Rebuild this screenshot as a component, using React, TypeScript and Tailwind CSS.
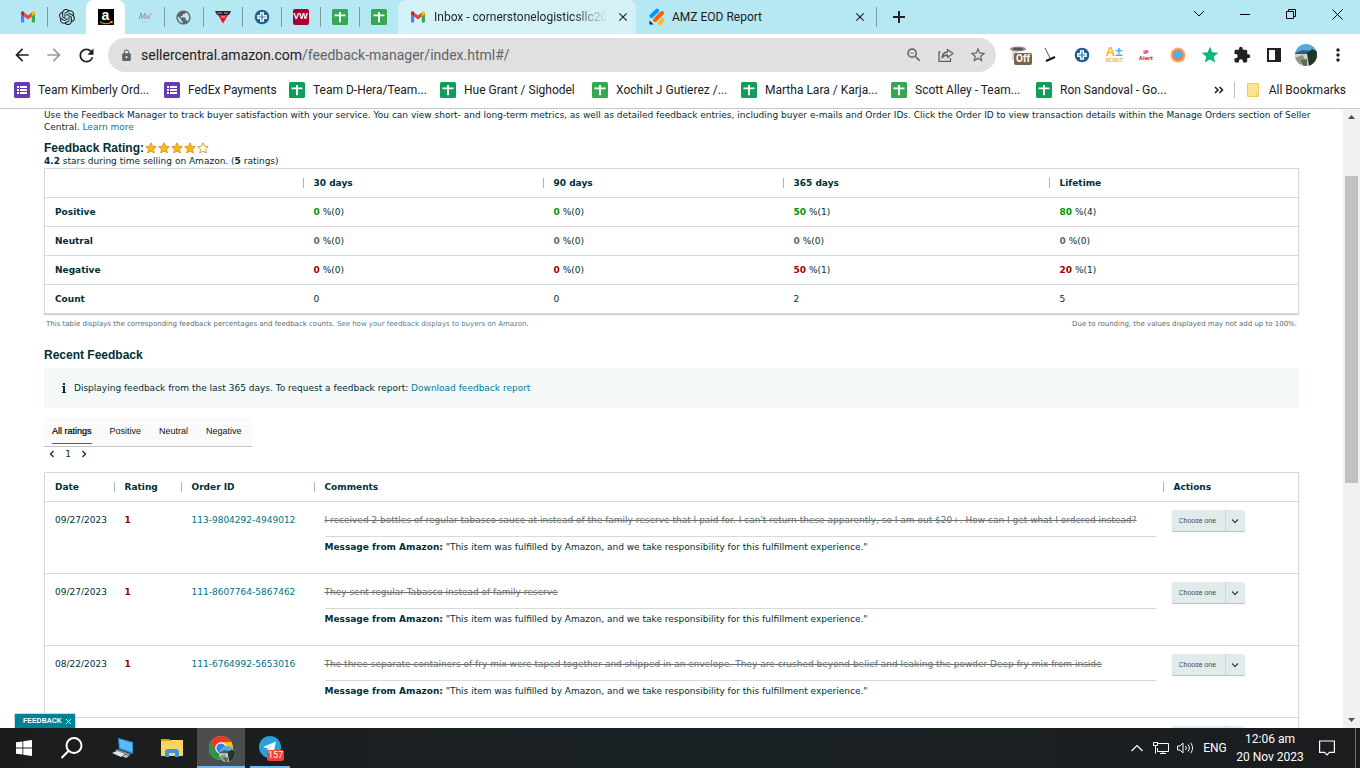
import React, { useState } from 'react';
import { SiOpenai } from 'react-icons/si';
import {
  MdArrowBack,
  MdArrowForward,
  MdClose,
  MdExtension,
  MdLock,
  MdMoreVert,
  MdPublic,
  MdRefresh,
  MdStar,
  MdStarBorder,
  MdZoomOut,
} from 'react-icons/md';

/* ---------- Small icons ---------- */

const GmailIcon = () => (
  <svg className="shrink-0" width="16" height="16" viewBox="0 0 16 16" aria-hidden="true">
    <path d="M1 4.200V12.500a1 1 0 0 0 1 1h2.200V6.600z" fill="#4285f4" />
    <path d="M15 4.200V12.500a1 1 0 0 1-1 1h-2.200V6.600z" fill="#34a853" />
    <path d="M11.800 3.600v3.900L15 5.100V4c0-1.400-1.500-2.100-2.600-1.300z" fill="#fbbc04" />
    <path d="M4.200 7.500V3.600L8 6.400l3.800-2.800v3.900L8 10.400z" fill="#ea4335" />
    <path d="M1 4v1.100l3.200 2.400V3.600l-.6-.9C2.500 1.900 1 2.600 1 4z" fill="#c5221f" />
  </svg>
);

const AmazonIcon = () => (
  <span className="relative flex h-4 w-4 justify-center bg-black font-['Liberation_Sans',sans-serif] text-sm leading-3 font-bold text-white">
    a
    <svg className="absolute bottom-0 left-0" width="16" height="4" viewBox="0 0 16 4" aria-hidden="true">
      <path d="M2 .8c3.500 2.600 8.500 2.600 12 0M12 .4l2.200.1-.4 1.900" fill="none" stroke="#f79400" strokeWidth="1.100" />
    </svg>
  </span>
);

const SheetIcon = ({ color = '#34a853' }: { color?: string }) => (
  <svg className="shrink-0" width="16" height="16" viewBox="0 0 16 16" aria-hidden="true">
    <rect width="16" height="16" rx="1.500" fill={color} />
    <path d="M7 3h2v2.500h4.500v1.800H9v6H7v-6H2.500V5.500H7z" fill="#fff" />
  </svg>
);

const FormIcon = () => (
  <svg className="shrink-0" width="16" height="16" viewBox="0 0 16 16" aria-hidden="true">
    <rect width="16" height="16" rx="1.500" fill="#673ab7" />
    <path d="M3 4h2v2H3zM6 4h7v2H6zM3 7h2v2H3zM6 7h7v2H6zM3 10h2v2H3zM6 10h7v2H6z" fill="#fff" />
  </svg>
);

const PlusBadgeIcon = () => (
  <svg width="16" height="16" viewBox="0 0 16 16" aria-hidden="true">
    <circle cx="8" cy="8" r="7.300" fill="#1f6391" />
    <path d="M6 3.200h4V6h2.800v4H10v2.800H6V10H3.200V6H6z" fill="#fff" />
    <path d="M7.400 4.500h1.200v2.900h2.900v1.200H8.600v2.900H7.400V8.600H4.500V7.400h2.900z" fill="#2c77a5" />
  </svg>
);

const TriangleIcon = () => (
  <svg width="16" height="16" viewBox="0 0 16 16" aria-hidden="true">
    <path d="M0 2h16l-2 4H2z" fill="#2a1a3e" />
    <path d="M2 4h5M9 4h4" stroke="#e8a13a" strokeWidth="1" />
    <path d="M3 6h10L8 14.500z" fill="#f0131e" />
    <path d="M6 8h4" stroke="#fff" strokeWidth=".8" />
  </svg>
);

const ScribbleIcon = () => (
  <svg width="16" height="16" viewBox="0 0 16 16" aria-hidden="true">
    <path d="M2 10l2-6 1 6 3-6v6" fill="none" stroke="#7d9bb5" strokeWidth="1" />
    <path d="M8 5l2 5 1-4 1 4 2-6" fill="none" stroke="#d99aa5" strokeWidth="1" />
    <path d="M4 13h8" stroke="#b7cdd6" strokeWidth="1" />
  </svg>
);

const JotformIcon = () => (
  <svg className="shrink-0" width="18" height="18" viewBox="0 0 18 18" aria-hidden="true">
    <path d="M3.500 8L9 2.700" stroke="#0099ff" strokeWidth="4" strokeLinecap="round" />
    <path d="M7 12l7-7" stroke="#ff6100" strokeWidth="4" strokeLinecap="round" />
    <path d="M11.500 15l3-3" stroke="#ffb629" strokeWidth="4" strokeLinecap="round" />
    <path d="M1.500 12.500v4h4z" fill="#0a1551" />
  </svg>
);

const ShareIcon = () => (
  <svg width="18" height="18" viewBox="0 0 18 18" fill="none" stroke="#5f6368" strokeWidth="1.300" aria-hidden="true">
    <path d="M3.500 6H2v9.300h11.500V12" />
    <path d="M10.500 3.500L16 7.500l-5.500 4V9C8 9 6.300 10 5 12c.3-3.500 2.300-5.800 5.500-6z" strokeLinejoin="round" />
  </svg>
);

const AvatarIcon = ({ size = 22 }: { size?: number }) => (
  <svg width={size} height={size} viewBox="0 0 22 22" aria-hidden="true">
    <clipPath id={`avatar-${size}`}>
      <circle cx="11" cy="11" r="11" />
    </clipPath>
    <g clipPath={`url(#avatar-${size})`}>
      <rect width="22" height="22" fill="#5aa9dd" />
      <path d="M0 9l8-3 14 2v3H0z" fill="#35598a" />
      <path d="M0 10h22v12H0z" fill="#d3d0bb" />
      <path d="M0 14l8-3 2 6-6 5H0z" fill="#8f9684" />
      <path d="M12 9l5-4 5 2v9l-4 6h-4l-1-6z" fill="#23352b" />
      <path d="M6 16l6-1v7H8z" fill="#5d6b52" />
    </g>
  </svg>
);

const Chevron = ({ d, size = 8 }: { d: string; size?: number }) => (
  <svg width={size} height={size} viewBox="0 0 8 8" fill="none" stroke="currentColor" strokeWidth="1.300" aria-hidden="true">
    <path d={d} />
  </svg>
);

/* ---------- Browser chrome ---------- */

interface PinnedTab {
  name: string;
  icon: React.ReactNode;
  active?: boolean;
  divider?: boolean;
}

const pinnedTabs: PinnedTab[] = [
  { name: 'Gmail', icon: <GmailIcon />, divider: true },
  { name: 'ChatGPT', icon: <SiOpenai size={16} color="#202124" /> },
  { name: 'Amazon', icon: <AmazonIcon />, active: true },
  { name: 'Notes', icon: <ScribbleIcon />, divider: true },
  { name: 'Web', icon: <MdPublic size={17} color="#5f6368" />, divider: true },
  { name: 'Triangle', icon: <TriangleIcon />, divider: true },
  { name: 'Plus', icon: <PlusBadgeIcon />, divider: true },
  {
    name: 'VW',
    icon: (
      <span className="flex h-4 w-4 items-center justify-center rounded-xs bg-[#a3002b] font-['Liberation_Sans',sans-serif] text-[9px] font-bold text-white">
        VW
      </span>
    ),
    divider: true,
  },
  { name: 'Sheet 1', icon: <SheetIcon />, divider: true },
  { name: 'Sheet 2', icon: <SheetIcon /> },
];

const TabStrip = () => (
  <div className="flex h-[34px] shrink-0 items-stretch bg-[#b5e8f2] pl-2 text-[#202124]">
    {pinnedTabs.map((tab) => (
      <button
        key={tab.name}
        aria-label={tab.name}
        className={
          tab.active
            ? 'flex w-[39px] items-center justify-center rounded-t-lg bg-white'
            : 'relative flex w-[39px] items-center justify-center'
        }
      >
        {tab.icon}
        {tab.divider && <span className="absolute top-[7px] -right-px h-5 w-px bg-[#7f9aa1]" />}
      </button>
    ))}
    <div className="flex w-[238px] items-center rounded-t-lg bg-[#d3f1f6] pr-1.5 pl-3 text-xs">
      <GmailIcon />
      <span className="ml-2 flex-1 bg-gradient-to-r from-[#202124] from-80% to-transparent bg-clip-text whitespace-nowrap text-transparent">
        Inbox - cornerstonelogisticsllc20
      </span>
      <button aria-label="Close tab" className="ml-2 flex w-4 justify-center">
        <MdClose size={14} />
      </button>
    </div>
    <div className="relative flex w-[240px] items-center pr-2 pl-3 text-xs">
      <JotformIcon />
      <span className="ml-1.5 flex-1">AMZ EOD Report</span>
      <button aria-label="Close tab" className="flex w-4 justify-center">
        <MdClose size={14} />
      </button>
      <span className="absolute top-[7px] -right-px h-5 w-px bg-[#7f9aa1]" />
    </div>
    <button aria-label="New tab" className="ml-4 flex items-center">
      <svg width="14" height="14" viewBox="0 0 14 14" stroke="#202124" strokeWidth="2">
        <path d="M1 7h12M7 1v12" />
      </svg>
    </button>
    <div className="mb-1.5 ml-auto flex items-center">
      <button aria-label="Search tabs" className="flex w-[46px] justify-center">
        <svg width="12" height="8" viewBox="0 0 12 8" fill="none" stroke="#000">
          <path d="M1 1l5 5 5-5" />
        </svg>
      </button>
      <button aria-label="Minimize" className="flex w-[46px] justify-center">
        <span className="h-px w-2.5 bg-black" />
      </button>
      <button aria-label="Restore" className="flex w-[46px] justify-center">
        <svg width="10" height="10" viewBox="0 0 10 10" fill="none" stroke="#000">
          <path d="M.5 2.500h7v7h-7zM2.500 2V.5h7v7H8" />
        </svg>
      </button>
      <button aria-label="Close" className="flex w-[46px] justify-center">
        <svg width="11" height="11" viewBox="0 0 11 11" stroke="#000">
          <path d="M.5.5l10 10M10.500.5l-10 10" />
        </svg>
      </button>
    </div>
  </div>
);

const extensions: { name: string; icon: React.ReactNode }[] = [
  {
    name: 'Off',
    icon: (
      <span className="relative flex h-5 w-5 justify-center">
        <svg width="16" height="16" viewBox="0 0 16 16">
          <ellipse cx="8" cy="4" rx="8" ry="2.500" fill="#8b8b8b" />
          <ellipse cx="8" cy="4" rx="5" ry="1.200" fill="#555" />
          <path d="M2 6v9h5V7z" fill="#d8d8d8" />
        </svg>
        <span className="absolute top-2 left-1.5 rounded-xs bg-[#7a6245] px-0.5 text-[10px] leading-3 font-bold text-white">Off</span>
      </span>
    ),
  },
  {
    name: 'Broom',
    icon: (
      <svg width="16" height="16" viewBox="0 0 16 16" fill="none">
        <path d="M3 1l5 10" stroke="#555" />
        <path d="M4 14l9-4" stroke="#111" strokeWidth="2" />
      </svg>
    ),
  },
  { name: 'Plus', icon: <PlusBadgeIcon /> },
  {
    name: 'Scout',
    icon: (
      <span className="flex flex-col items-center font-['Liberation_Sans',sans-serif] font-bold text-[#fbb829]">
        <span className="text-[13px] leading-[10px]">
          A<span className="text-[#3cb6dd]">±</span>
        </span>
        <span className="text-[5px] leading-[6px] text-[#f5a24a]">SCOUT</span>
      </span>
    ),
  },
  {
    name: 'IP Alert',
    icon: (
      <span className="flex flex-col items-center font-['DejaVu_Sans',sans-serif] text-[5px] leading-[6px] font-bold text-[#e6151f]">
        <span>IP</span>
        <span>Alert</span>
      </span>
    ),
  },
  {
    name: 'Orb',
    icon: (
      <svg width="16" height="16" viewBox="0 0 16 16">
        <circle cx="8" cy="8" r="7.500" fill="#f7a76c" />
        <circle cx="8" cy="8" r="5.500" fill="#f07c35" />
        <circle cx="8" cy="7.500" r="4" fill="#46b4ee" />
      </svg>
    ),
  },
  { name: 'Star', icon: <MdStar size={20} color="#0bb77a" /> },
  { name: 'Extensions', icon: <MdExtension size={18} color="#202124" /> },
  {
    name: 'Side panel',
    icon: (
      <svg width="14" height="14" viewBox="0 0 14 14">
        <path d="M0 0h14v14H0zM2 2v10h6V2z" fill="#202124" fillRule="evenodd" />
      </svg>
    ),
  },
  { name: 'Profile', icon: <AvatarIcon /> },
  { name: 'Menu', icon: <MdMoreVert size={20} color="#202124" /> },
];

const Toolbar = () => (
  <div className="flex h-[42px] shrink-0 items-center bg-white pr-1.5 pl-1.5">
    <button aria-label="Back" className="flex w-8 justify-center">
      <MdArrowBack size={20} color="#202124" />
    </button>
    <button aria-label="Forward" className="flex w-8 justify-center">
      <MdArrowForward size={20} color="#9a9b9d" />
    </button>
    <button aria-label="Reload" className="flex w-8 justify-center">
      <MdRefresh size={21} color="#202124" />
    </button>
    <div className="mr-1.5 ml-1.5 flex h-[34px] flex-1 items-center rounded-full bg-[#e0e0e0] pr-0.5 pl-3 text-sm">
      <MdLock size={13} color="#5f6368" />
      <span className="ml-2 flex-1 text-[#5f6368]">
        <span className="text-[#202124]">sellercentral.amazon.com</span>/feedback-manager/index.html#/
      </span>
      <button aria-label="Zoom" className="flex w-8 justify-center">
        <MdZoomOut size={18} color="#5f6368" />
      </button>
      <button aria-label="Share" className="flex w-8 justify-center">
        <ShareIcon />
      </button>
      <button aria-label="Bookmark" className="flex w-8 justify-center">
        <MdStarBorder size={18} color="#5f6368" />
      </button>
    </div>
    {extensions.map((ext) => (
      <button key={ext.name} aria-label={ext.name} className="flex w-8 items-center justify-center">
        {ext.icon}
      </button>
    ))}
  </div>
);

const bookmarks = [
  { label: 'Team Kimberly Ord...', icon: <FormIcon />, width: 'w-[150px]' },
  { label: 'FedEx Payments', icon: <FormIcon />, width: 'w-[125px]' },
  { label: 'Team D-Hera/Team...', icon: <SheetIcon color="#0f9d58" />, width: 'w-[151px]' },
  { label: 'Hue Grant / Sighodel', icon: <SheetIcon color="#0f9d58" />, width: 'w-[152px]' },
  { label: 'Xochilt J Gutierez /...', icon: <SheetIcon />, width: 'w-[149px]' },
  { label: 'Martha Lara / Karja...', icon: <SheetIcon color="#0f9d58" />, width: 'w-[150px]' },
  { label: 'Scott Alley - Team...', icon: <SheetIcon />, width: 'w-[145px]' },
  { label: 'Ron Sandoval - Go...', icon: <SheetIcon color="#0f9d58" />, width: 'w-[150px]' },
];

const BookmarksBar = () => (
  <div className="flex h-[33px] shrink-0 items-center border-b border-[#c6c7c9] bg-white pr-3.5 pb-1 pl-3.5 text-xs text-[#202124]">
    {bookmarks.map((b) => (
      <a key={b.label} href="#" className={`flex items-center gap-2 whitespace-nowrap ${b.width}`}>
        {b.icon}
        {b.label}
      </a>
    ))}
    <button aria-label="More bookmarks" className="mr-2.5 ml-auto">
      <svg width="10" height="8" viewBox="0 0 10 8" fill="none" stroke="#202124" strokeWidth="1.600">
        <path d="M1 1l3 3-3 3M5.500 1l3 3-3 3" />
      </svg>
    </button>
    <span className="h-4 w-px bg-[#b9bbbd]" />
    <button className="ml-3 flex items-center gap-2.5 whitespace-nowrap">
      <svg width="12" height="14" viewBox="0 0 12 14">
        <path d="M.5.5h11v13H.5z" fill="#fde293" stroke="#f0cb5b" />
        <path d="M9.500 11v2.500" stroke="#f0cb5b" />
      </svg>
      All Bookmarks
    </button>
  </div>
);

/* ---------- Feedback manager ---------- */

type Tone = 'positive' | 'neutral' | 'negative';

const toneClass: Record<Tone, string> = {
  positive: 'text-[#009400]',
  neutral: 'text-[#5f6b6d]',
  negative: 'text-[#a00000]',
};

const ratingRows: { label: string; tone: Tone; values: [number, number][] }[] = [
  { label: 'Positive', tone: 'positive', values: [[0, 0], [0, 0], [50, 1], [80, 4]] },
  { label: 'Neutral', tone: 'neutral', values: [[0, 0], [0, 0], [0, 0], [0, 0]] },
  { label: 'Negative', tone: 'negative', values: [[0, 0], [0, 0], [50, 1], [20, 1]] },
];

const HeaderCell = ({ children }: { children?: React.ReactNode }) => (
  <th className="group p-0 text-left">
    <div className="flex h-2.5 items-center border-r border-[#aab7b8] pl-2.5 whitespace-nowrap group-last:border-r-0">{children}</div>
  </th>
);

const RatingTable = () => (
  <table className="w-full table-fixed border border-[#d5dbdb] bg-white shadow-[0_1px_1px_#d0d4d4]">
    <colgroup>
      <col className="w-[259px]" />
      <col className="w-[240px]" />
      <col className="w-[240px]" />
      <col className="w-[266px]" />
      <col />
    </colgroup>
    <thead>
      <tr className="h-[29px]">
        <HeaderCell />
        <HeaderCell>30 days</HeaderCell>
        <HeaderCell>90 days</HeaderCell>
        <HeaderCell>365 days</HeaderCell>
        <HeaderCell>Lifetime</HeaderCell>
      </tr>
    </thead>
    <tbody>
      {ratingRows.map((row) => (
        <tr key={row.label} className="h-[29px] border-t border-[#d5dbdb]">
          <th className="py-0 pl-2.5 text-left">{row.label}</th>
          {row.values.map(([percent, count], i) => (
            <td key={i} className="py-0 pl-2.5">
              <b className={toneClass[row.tone]}>{percent}</b> %({count})
            </td>
          ))}
        </tr>
      ))}
      <tr className="h-[29px] border-t border-[#d5dbdb]">
        <th className="py-0 pl-2.5 text-left">Count</th>
        {[0, 0, 2, 5].map((count, i) => (
          <td key={i} className="py-0 pl-2.5">
            {count}
          </td>
        ))}
      </tr>
    </tbody>
  </table>
);

const feedback = [
  {
    date: '09/27/2023',
    rating: 1,
    orderId: '113-9804292-4949012',
    comment:
      "I received 2 bottles of regular tabasco sauce at instead of the family reserve that I paid for. I can't return these apparently, so I am out $20+. How can I get what I ordered instead?",
  },
  {
    date: '09/27/2023',
    rating: 1,
    orderId: '111-8607764-5867462',
    comment: 'They sent regular Tabasco instead of family reserve',
  },
  {
    date: '08/22/2023',
    rating: 1,
    orderId: '111-6764992-5653016',
    comment:
      'The three separate containers of fry mix were taped together and shipped in an envelope. They are crushed beyond belief and leaking the powder Deep fry mix from inside',
  },
];

const ActionSelect = ({ label }: { label: string }) => (
  <div className="relative h-[21px] w-[73px] text-[#3f4f52]">
    <select
      aria-label={label}
      className="block h-full w-full appearance-none rounded-xs bg-[#e2ebec] pl-[7px] font-['Liberation_Sans',sans-serif] text-[7px] shadow-[0_1px_1px_#b5bdbe]"
    >
      <option>Choose one</option>
    </select>
    <span className="pointer-events-none absolute inset-y-0 right-0 flex w-5 items-center justify-center border-l border-[#cfd9da]">
      <Chevron d="M1 2.500l3 3 3-3" />
    </span>
  </div>
);

const FeedbackTable = () => (
  <table className="w-full table-fixed border border-[#d5dbdb] bg-white shadow-[0_1px_1px_#d0d4d4]">
    <colgroup>
      <col className="w-[70px]" />
      <col className="w-[67px]" />
      <col className="w-[133px]" />
      <col />
      <col className="w-[135px]" />
    </colgroup>
    <thead>
      <tr className="h-[29px]">
        <HeaderCell>Date</HeaderCell>
        <HeaderCell>Rating</HeaderCell>
        <HeaderCell>Order ID</HeaderCell>
        <HeaderCell>Comments</HeaderCell>
        <HeaderCell>Actions</HeaderCell>
      </tr>
    </thead>
    <tbody>
      {feedback.map((item) => (
        <tr key={item.orderId} className="h-[72px] border-t border-[#d5dbdb] align-top">
          <td className="pt-3 pl-2.5">{item.date}</td>
          <td className="pt-3 pl-2.5 font-bold text-[#a00000]">{item.rating}</td>
          <td className="pt-3 pl-2.5">
            <a href="#" className="text-[#007185]">
              {item.orderId}
            </a>
          </td>
          <td className="pt-3 pr-2 pl-2.5">
            <div className="border-b border-[#d5dbdb] pb-2.5 whitespace-nowrap text-[#6b6f70] line-through">{item.comment}</div>
            <p className="pt-1">
              <b>Message from Amazon:</b> "This item was fulfilled by Amazon, and we take responsibility for this fulfillment experience."
            </p>
          </td>
          <td className="pt-2 pl-2">
            <ActionSelect label={`Action for order ${item.orderId}`} />
          </td>
        </tr>
      ))}
      <tr className="h-[72px] border-t border-[#d5dbdb] align-top">
        <td colSpan={4} />
        <td className="pt-2 pl-2">
          <ActionSelect label="Action for next order" />
        </td>
      </tr>
    </tbody>
  </table>
);

const RatingStars = () => (
  <svg width="64" height="12" viewBox="0 0 64 12" aria-label="4 of 5 stars">
    {[0, 1, 2, 3, 4].map((i) => (
      <path
        key={i}
        d="M6 .8l1.600 3.500 3.700.4-2.800 2.500.8 3.800L6 9.100 2.700 11l.8-3.800L.7 4.700l3.700-.4z"
        transform={`translate(${i * 13} 0)`}
        fill={i < 4 ? '#fdb913' : '#fff'}
        stroke="#d9932b"
        strokeWidth=".9"
      />
    ))}
  </svg>
);

const filters = ['All ratings', 'Positive', 'Neutral', 'Negative'];

const FeedbackManager = () => {
  const [filter, setFilter] = useState('All ratings');

  return (
    <main className="h-full overflow-hidden px-11 font-['DejaVu_Sans',sans-serif] text-[9px] leading-3 text-[#002f36]">
      <p className="-mr-6">
        Use the Feedback Manager to track buyer satisfaction with your service. You can view short- and long-term metrics, as well as detailed feedback entries, including buyer e-mails and Order IDs. Click the Order ID to view transaction details within the Manage Orders section of Seller Central.{' '}
        <a href="#" className="text-[#007e93]">
          Learn more
        </a>
      </p>
      <h2 className="mt-2 flex items-center gap-px font-['Liberation_Sans',sans-serif] text-xs leading-[14px] font-bold">
        Feedback Rating:
        <RatingStars />
      </h2>
      <p className="mb-px">
        <b>4.2</b> stars during time selling on Amazon. (<b>5</b> ratings)
      </p>
      <RatingTable />
      <div className="mt-1 flex justify-between px-0.5 text-[7px] text-[#5a6b70]">
        <p>
          This table displays the corresponding feedback percentages and feedback counts.{' '}
          <a href="#" className="text-[#4f8296]">
            See how your feedback displays to buyers on Amazon.
          </a>
        </p>
        <p>Due to rounding, the values displayed may not add up to 100%.</p>
      </div>
      <h2 className="mt-[18px] font-['Liberation_Sans',sans-serif] text-xs leading-[14px] font-bold">Recent Feedback</h2>
      <div className="mt-1.5 flex h-10 items-center bg-[#f4f8f9] pl-[18px]">
        <svg className="mr-2" width="4" height="10" viewBox="0 0 4 10" fill="#002f36" aria-hidden="true">
          <path d="M1 0h2v2H1zM0 3h3v6h1v1H0V9h1V4H0z" />
        </svg>
        <p>
          Displaying feedback from the last 365 days. To request a feedback report:{' '}
          <a href="#" className="text-[#007e93]">
            Download feedback report
          </a>
        </p>
      </div>
      <div className="mt-[9px] flex h-[30px] w-fit gap-[18px] border-b border-[#c4c4c4] bg-[#fafafa] pr-2.5 pl-2 font-['Liberation_Sans',sans-serif]">
        {filters.map((name) => (
          <button
            key={name}
            onClick={() => setFilter(name)}
            className={
              name === filter
                ? 'mb-0.5 border-b border-[#008296] pt-0.5 text-black [-webkit-text-stroke:0.2px_black]'
                : 'mb-0.5 border-b border-transparent pt-0.5 text-[#111]'
            }
          >
            {name}
          </button>
        ))}
      </div>
      <nav className="mt-px flex items-center gap-2 pl-1" aria-label="Pages">
        <button aria-label="Previous page" className="flex w-2 justify-center">
          <Chevron d="M5.500 1l-3 3 3 3" />
        </button>
        <button className="w-2">1</button>
        <button aria-label="Next page" className="flex w-2 justify-center">
          <Chevron d="M2.500 1l3 3-3 3" />
        </button>
      </nav>
      <div className="mt-3">
        <FeedbackTable />
      </div>
    </main>
  );
};

const PageScrollbar = () => (
  <div className="flex w-[17px] shrink-0 flex-col items-center bg-[#f1f1f1] py-1.5">
    <svg width="7" height="4" viewBox="0 0 7 4" fill="#505050">
      <path d="M0 4l3.500-4L7 4z" />
    </svg>
    <div className="flex w-[13px] flex-1 flex-col">
      <div className="grow-[19]" />
      <div className="grow-[102] bg-[#c1c1c1]" />
      <div className="grow-[78]" />
    </div>
    <svg width="7" height="4" viewBox="0 0 7 4" fill="#505050">
      <path d="M0 0l3.500 4L7 0z" />
    </svg>
  </div>
);

/* ---------- Windows taskbar ---------- */

const Taskbar = () => (
  <footer className="flex h-10 shrink-0 items-stretch bg-gradient-to-r from-[#1c1c1c] via-[#1a2225] to-[#1b1d1f] text-white">
    <button aria-label="Start" className="flex w-12 items-center justify-center">
      <svg width="16" height="16" viewBox="0 0 16 16" fill="#fff">
        <path d="M0 2.300L6.500 1.400v6.200H0zM7.300 1.300L16 0v7.600H7.300zM0 8.400h6.500v6.200L0 13.700zM7.300 8.400H16V16l-8.700-1.300z" />
      </svg>
    </button>
    <button aria-label="Search" className="flex w-12 items-center justify-center">
      <svg width="24" height="24" viewBox="0 0 24 24" fill="none" stroke="#fff" strokeWidth="2">
        <circle cx="14" cy="9.500" r="7.500" />
        <path d="M8.700 14.800L1.500 22" />
      </svg>
    </button>
    <button aria-label="This PC" className="ml-[3px] flex w-12 items-center justify-center">
      <svg width="24" height="24" viewBox="0 0 24 24">
        <path d="M7 2l15 4v12L8 13z" fill="#2b8fdc" />
        <path d="M8 3l13 4v9L9 12z" fill="#5bb9f7" />
        <path d="M6 13l14 5-2 2L4 15z" fill="#7d8891" />
        <path d="M1 17l5-2 8 3-4 3z" fill="#dfe4e8" />
        <path d="M11 20l4-1 3 1-3 2z" fill="#c7ced4" />
      </svg>
    </button>
    <button aria-label="File Explorer" className="mr-px ml-px flex w-12 items-center justify-center">
      <svg width="22" height="20" viewBox="0 0 22 20">
        <path d="M0 1h8l2 2H0z" fill="#dd9a14" />
        <path d="M0 3h8l2-1h12v16H0z" fill="#fcd462" />
        <path d="M4 19v-6l2-2h10l2 2v6h-4v-4H8v4z" fill="#3d95d6" />
      </svg>
    </button>
    <button aria-label="Chrome" className="flex w-12 items-center justify-center border-b-2 border-[#76b9ed] bg-[#4b4d4e]">
      <span className="relative mt-0.5">
        <svg width="24" height="24" viewBox="0 0 24 24">
          <circle cx="12" cy="12" r="12" fill="#fbc116" />
          <path d="M12 12L1.600 6A12 12 0 0 0 12 24l5-9z" fill="#279847" />
          <path d="M12 6h10.400A12 12 0 0 0 1.600 6l5.200 9z" fill="#e33b2e" />
          <circle cx="12" cy="12" r="5.800" fill="#fff" />
          <circle cx="12" cy="12" r="4.600" fill="#3a7cec" />
        </svg>
        <span className="absolute top-2.5 left-2.5">
          <AvatarIcon size={16} />
        </span>
      </span>
    </button>
    <button aria-label="Telegram" className="mx-[5px] flex w-10 items-center justify-center border-b-2 border-[#76b9ed]">
      <span className="relative">
        <svg width="22" height="22" viewBox="0 0 22 22">
          <circle cx="11" cy="11" r="11" fill="#2a9fd8" />
          <path d="M4 11l13-5.500-2.300 11-3.700-2.700-2 2-.5-3.300z" fill="#fff" />
          <path d="M8.500 12.500L14 8l-4.500 5.500-.5 2.300z" fill="#b5d9ec" />
        </svg>
        <span className="absolute top-3.5 left-2 rounded-xs bg-[#f0403a] px-px text-[9px] leading-[11px]">157</span>
      </span>
    </button>
    <div className="ml-auto flex items-center text-xs">
      <button aria-label="Hidden icons" className="flex w-6 justify-center">
        <svg width="12" height="8" viewBox="0 0 12 8" fill="none" stroke="#fff" strokeWidth="1.200">
          <path d="M.5 7L6 1.500 11.500 7" />
        </svg>
      </button>
      <button aria-label="Network" className="flex w-6 justify-center">
        <svg width="16" height="14" viewBox="0 0 16 14" fill="none" stroke="#fff">
          <path d="M5 2.500h10.500v8H4.500V7M7 12.500h6M10 10.500v2M.5 1.500h4v3h-4zM2.500 4.500v8" />
        </svg>
      </button>
      <button aria-label="Volume" className="flex w-6 justify-center">
        <svg width="17" height="14" viewBox="0 0 17 14" fill="none" stroke="#fff">
          <path d="M.5 5h2.500l3-3v10L3 9H.5zM8.500 5c1 1.200 1 2.800 0 4M11 3.500c1.800 2 1.800 5 0 7M13.500 1.800c2.700 3 2.700 7.400 0 10.400" />
        </svg>
      </button>
      <span className="w-9 text-center">ENG</span>
      <time className="w-[74px] text-center leading-[18px]">
        12:06 am
        <br />
        20 Nov 2023
      </time>
      <button aria-label="Notifications" className="flex w-10 justify-center">
        <svg width="16" height="16" viewBox="0 0 16 16" fill="none" stroke="#fff" strokeWidth="1.200">
          <path d="M.6 1h14.800v11.400H10.500L8 15l-2.500-2.600H.6z" />
        </svg>
      </button>
      <span className="ml-2 h-10 w-[5px] border-l border-[#6b6f72]" />
    </div>
  </footer>
);

export default function App() {
  return (
    <div className="flex h-screen flex-col overflow-hidden bg-white font-['Roboto',sans-serif]">
      <TabStrip />
      <Toolbar />
      <BookmarksBar />
      <div className="relative flex min-h-0 flex-1">
        <div className="min-w-0 flex-1">
          <FeedbackManager />
        </div>
        <PageScrollbar />
        <button className="absolute bottom-0 left-3.5 flex h-[15px] items-center gap-1 rounded-t-xs border border-b-0 border-[#cfd8d9] bg-[#008296] px-1 pl-2 font-['Liberation_Sans',sans-serif] text-[7px] font-bold text-white">
          FEEDBACK
          <svg width="5" height="5" viewBox="0 0 5 5" stroke="#fff" strokeWidth=".8">
            <path d="M0 0l5 5M5 0L0 5" />
          </svg>
        </button>
      </div>
      <Taskbar />
    </div>
  );
}
